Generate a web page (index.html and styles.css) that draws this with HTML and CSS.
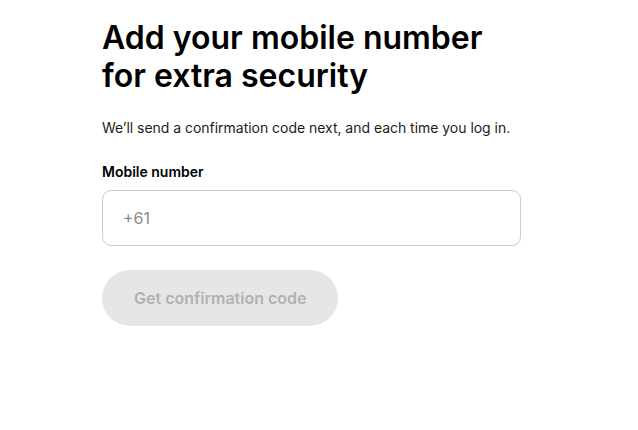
FILE: index.html
```html
<!DOCTYPE html>
<html lang="en">
<head>
<meta charset="utf-8">
<link rel="stylesheet" href="styles.css">
</head>
<body>
<main class="page">
  <h1 class="title">Add your mobile number<br>for extra security</h1>
  <p class="subtitle">We’ll send a confirmation code next, and each time you log in.</p>
  <label class="label" for="phone">Mobile number</label>
  <input class="field" id="phone" type="tel" placeholder="+61">
  <button class="btn" type="button" disabled>Get confirmation code</button>
</main>
</body>
</html>
```

FILE: styles.css
```css
* { box-sizing: border-box; }
html, body { margin: 0; background: #fff; }
body { font-family: Inter, "Noto Sans", sans-serif; color: #000; }
.page {
  width: 419px;
  margin-left: 102px;
  padding-top: 19px;
  display: flex;
  flex-direction: column;
  align-items: flex-start;
}
.title {
  margin: 0;
  font-size: 32px;
  line-height: 38px;
  font-weight: 600;
  letter-spacing: 0;
  color: #000;
}
.subtitle {
  margin: 23px 0 0;
  font-size: 14px;
  line-height: 20px;
  letter-spacing: -0.03px;
  color: #1c1c1c;
}
.label {
  margin-top: 24px;
  font-size: 14px;
  line-height: 20px;
  font-weight: 600;
  color: #000;
}
.field {
  margin-top: 8px;
  width: 419px;
  height: 56px;
  border: 1px solid #cccccc;
  border-radius: 9px;
  padding: 0 20px;
  font-family: inherit;
  font-size: 16px;
  color: #000;
  outline: none;
}
.field::placeholder { color: #8a8a8a; }
.btn {
  margin-top: 24px;
  height: 56px;
  padding: 0 32px;
  border: none;
  border-radius: 28px;
  background: #e6e6e6;
  color: #b2b2b2;
  font-family: inherit;
  font-size: 16px;
  font-weight: 600;
}
```
